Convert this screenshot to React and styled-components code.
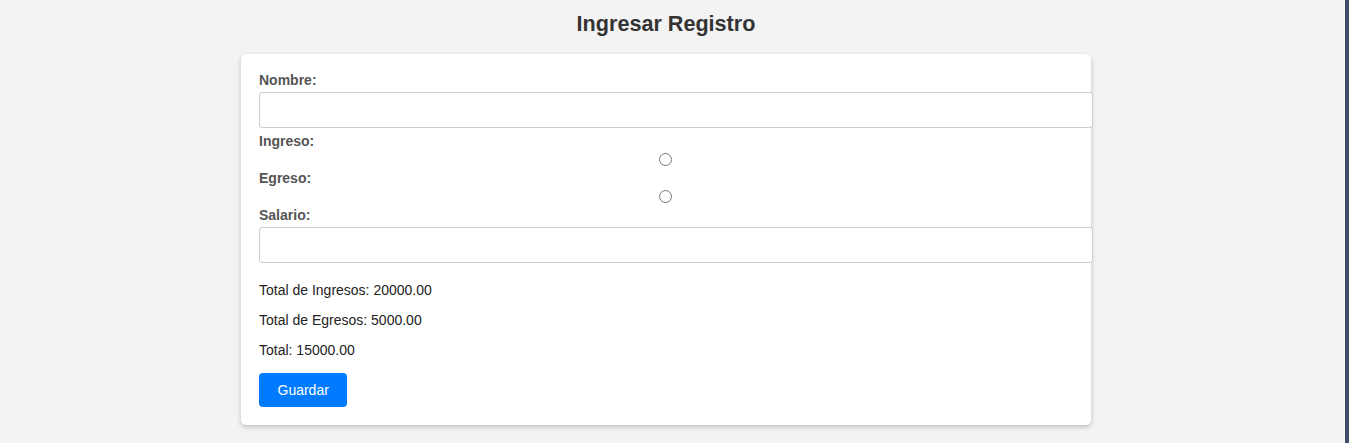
import styled, { createGlobalStyle } from "styled-components";

const GlobalStyle = createGlobalStyle`
  html, body {
    margin: 0;
    padding: 0;
    background: #f3f3f3;
    font-family: "Liberation Sans", Arial, sans-serif;
    font-size: 14px;
  }
`;

const fields = { nombre: "", salario: "" };
const totals = { ingresos: 20000, egresos: 5000 };

const App = () => {
  const total = totals.ingresos - totals.egresos;

  return (
    <Page>
      <GlobalStyle />
      <Main>
        <Title>Ingresar Registro</Title>
        <Card>
          <Label htmlFor="nombre">Nombre:</Label>
          <TextInput id="nombre" type="text" defaultValue={fields.nombre} />
          <Label htmlFor="ingreso">Ingreso:</Label>
          <Radio id="ingreso" type="radio" name="tipo" value="ingreso" />
          <Label htmlFor="egreso">Egreso:</Label>
          <Radio id="egreso" type="radio" name="tipo" value="egreso" />
          <Label htmlFor="salario">Salario:</Label>
          <TextInput id="salario" type="number" defaultValue={fields.salario} />
          <Summary>
            <p>Total de Ingresos: {totals.ingresos.toFixed(2)}</p>
            <p>Total de Egresos: {totals.egresos.toFixed(2)}</p>
            <p>Total: {total.toFixed(2)}</p>
          </Summary>
          <SaveButton>Guardar</SaveButton>
        </Card>
      </Main>
      <Gutter />
    </Page>
  );
};

export default App;

const Page = styled.div`
  display: flex;
  min-height: 100vh;
  background: #f3f3f3;
`;

const Main = styled.main`
  flex: 1;
  display: flex;
  flex-direction: column;
  align-items: center;
`;

const Gutter = styled.div`
  width: 17px;
  flex-shrink: 0;
  box-sizing: border-box;
  border-right: 4px solid #3e5068;
`;

const Title = styled.h2`
  margin: 12px 0 18px;
  font-size: 21.6px;
  line-height: 24px;
  font-weight: 700;
  color: #333;
`;

const Card = styled.div`
  width: 850px;
  box-sizing: border-box;
  padding: 18px;
  display: flex;
  flex-direction: column;
  align-items: flex-start;
  background: #fff;
  border-radius: 5px;
  box-shadow: 0 2px 5px rgba(0, 0, 0, 0.22);
`;

const Label = styled.label`
  display: block;
  margin: 0 0 4px;
  font-size: 14px;
  line-height: 16px;
  font-weight: 700;
  color: #555;
`;

const TextInput = styled.input`
  width: calc(100% + 20px);
  height: 36px;
  box-sizing: border-box;
  margin: 0 0 5px;
  padding: 8px 10px;
  border: 1px solid #ccc;
  border-radius: 3px;
  font-family: inherit;
  font-size: 14px;
  background: #fff;
  -moz-appearance: textfield;
  &::-webkit-outer-spin-button,
  &::-webkit-inner-spin-button {
    -webkit-appearance: none;
    margin: 0;
  }
`;

const Radio = styled.input`
  width: 13px;
  height: 13px;
  margin: 0 0 4px;
  align-self: center;
  transform: translateX(-1px);
`;

const Summary = styled.div`
  align-self: stretch;
  padding-bottom: 1px;
  p {
    margin: 14px 0;
    font-size: 14px;
    line-height: 16px;
    color: #222;
  }
`;

const SaveButton = styled.button`
  height: 34px;
  padding: 0 18.5px;
  border: none;
  border-radius: 4px;
  background: #007bff;
  color: #fff;
  font-family: inherit;
  font-size: 14px;
  cursor: pointer;
`;
